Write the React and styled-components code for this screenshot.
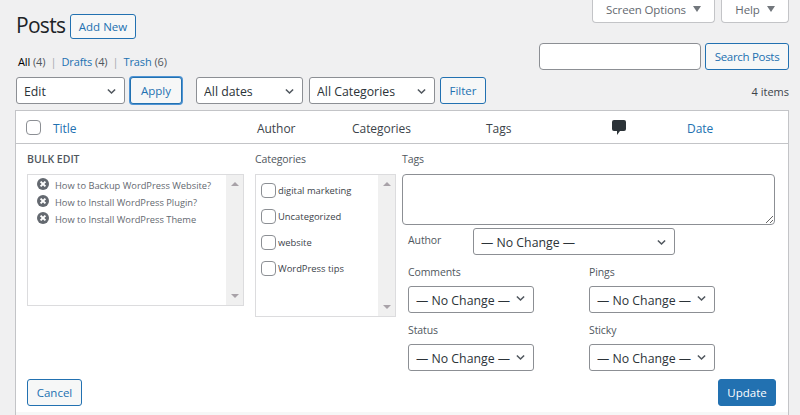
import React from "react";
import styled, { createGlobalStyle } from "styled-components";

const Global = createGlobalStyle`
  html, body { margin: 0; padding: 0; background: #f0f0f1; overflow: hidden; }
  body { font-family: "Open Sans", "Noto Sans", sans-serif; font-size: 12px; color: #3c434a; }
  * { box-sizing: border-box; }
`;

const chevron = `url("data:image/svg+xml,%3Csvg xmlns='http://www.w3.org/2000/svg' viewBox='0 0 10 7'%3E%3Cpath d='M1 1.2l4 4 4-4' fill='none' stroke='%2350575e' stroke-width='1.7'/%3E%3C/svg%3E")`;

const Page = styled.div`
  width: 800px;
  height: 415px;
  overflow: hidden;
  padding: 0 11px 0 16px;
  display: flex;
  flex-direction: column;
`;
const TopTabs = styled.div`
  height: 23px;
  display: flex;
  justify-content: flex-end;
  gap: 6px;
`;
const Tab = styled.div`
  width: ${p => p.$w}px;
  height: 23px;
  background: #fff;
  border: 1px solid #c3c4c7;
  border-top: 0;
  border-radius: 0 0 4px 4px;
  display: flex;
  align-items: center;
  justify-content: center;
  gap: 7px;
  font-size: 11.5px;
  letter-spacing: -0.15px;
  color: #646970;
  padding-bottom: 4px;
`;
const Caret = styled.i`
  width: 0;
  height: 0;
  border-left: 4px solid transparent;
  border-right: 4px solid transparent;
  border-top: 6px solid #72777c;
`;
const HeadRow = styled.div`
  display: flex;
  align-items: flex-start;
  justify-content: space-between;
  height: 54px;
`;
const TitleCol = styled.div`
  display: flex;
  flex-direction: column;
`;
const TitleLine = styled.div`
  display: flex;
  align-items: center;
  margin-top: -9px;
  height: 25px;
  margin-bottom: 15px;
`;
const H1 = styled.h1`
  margin: -3px 8px 0 0;
  width: 46px;
  font-size: 21px;
  letter-spacing: -0.7px;
  font-weight: 400;
  color: #1d2327;
`;
const Button = styled.button`
  font-family: inherit;
  font-size: 11.5px;
  letter-spacing: ${p => p.$ls || 0}px;
  height: ${p => p.$h || 27}px;
  width: ${p => p.$w}px;
  margin-left: ${p => p.$ml || 0}px;
  padding: 0;
  border-radius: 3px;
  border: 1px solid #2271b1;
  background: ${p => (p.$primary ? "#2271b1" : "#f6f7f7")};
  color: ${p => (p.$primary ? "#fff" : "#2271b1")};
  box-shadow: ${p => (p.$focus ? "0 0 0 1px #4f94d4" : "none")};
  flex: none;
`;
const Sub = styled.div`
  display: flex;
  gap: 5px;
  font-size: 11px;
  letter-spacing: -0.1px;
  padding-left: 2px;
  color: #646970;
  line-height: 16px;
`;
const SubLink = styled.span`
  color: ${p => (p.$current ? "#000" : "#2271b1")};
  & > em { font-style: normal; color: #50575e; }
`;
const Sep = styled.span`
  color: #a7aaad;
`;
const SearchBox = styled.div`
  display: flex;
  gap: 4px;
  margin-top: 20px;
`;
const TextInput = styled.input`
  width: 162px;
  height: 27px;
  border: 1px solid #8c8f94;
  border-radius: 4px;
  background: #fff;
  padding: 0 8px;
  outline: none;
`;
const Nav = styled.div`
  display: flex;
  align-items: center;
  height: 27px;
`;
const Select = styled.select`
  appearance: none;
  -webkit-appearance: none;
  flex: none;
  font-family: inherit;
  font-size: 12.3px;
  color: #2c3338;
  width: ${p => p.$w}px;
  height: 27px;
  margin-left: ${p => p.$ml || 0}px;
  padding: 2px 20px 0 7px;
  border: 1px solid #8c8f94;
  border-radius: 3px;
  background: #fff ${chevron} no-repeat right 8px top ${p => p.$arrowTop || 10}px;
  background-size: 9px 7px;
  outline: none;
`;
const Items = styled.div`
  margin-left: auto;
  font-size: 11px;
  padding-top: 1px;
  color: #3c434a;
`;
const Table = styled.div`
  margin-top: 6px;
  margin-left: -1px;
  height: 305px;
  background: #fff;
  border: 1px solid #c3c4c7;
  border-bottom: 0;
  display: flex;
  flex-direction: column;
`;
const Header = styled.div`
  height: 33px;
  flex: none;
  border-bottom: 1px solid #c3c4c7;
  display: grid;
  grid-template-columns: 37px 204px 95px 134px 125px 76px 1fr;
  align-items: center;
  font-size: 12px;
  letter-spacing: -0.05px;
`;
const Col = styled.div`
  padding-top: 2px;
  color: ${p => (p.$link ? "#2271b1" : "#3c434a")};
`;
const Check = styled.span`
  display: block;
  flex: none;
  width: 15px;
  height: 15px;
  background: #fff;
  border: 1px solid #8c8f94;
  border-radius: 4px;
`;
const HeadCheck = styled(Check)`
  margin-left: 10px;
`;
const Edit = styled.div`
  display: flex;
  flex: 1;
  padding: 7px 12px 0 11px;
  position: relative;
`;
const Left = styled.div`
  width: 228px;
  flex: none;
`;
const Middle = styled.div`
  width: 147px;
  flex: none;
`;
const Right = styled.div`
  width: 374px;
  flex: none;
`;
const Legend = styled.div`
  font-size: 10.5px;
  font-weight: 600;
  height: 16px;
  line-height: 16px;
  color: #50575e;
  margin-bottom: 7px;
`;
const Label = styled.div`
  font-size: 10.5px;
  letter-spacing: -0.1px;
  height: 16px;
  line-height: 16px;
  color: #50575e;
`;
const Cap = styled(Label)`
  margin-bottom: 7px;
`;
const ScrollBox = styled.div`
  width: ${p => p.$w}px;
  height: ${p => p.$h}px;
  border: 1px solid #dcdcde;
  display: flex;
`;
const ScrollContent = styled.div`
  flex: 1;
  min-width: 0;
  padding: ${p => p.$pad};
`;
const Scrollbar = styled.div`
  width: 17px;
  flex: none;
  background: #f0f0f0;
  display: flex;
  flex-direction: column;
  justify-content: space-between;
  align-items: center;
  padding: 7px 0;
`;
const ArrowUp = styled.i`
  width: 0;
  height: 0;
  border-left: 4px solid transparent;
  border-right: 4px solid transparent;
  border-bottom: 4px solid #a8a2a8;
`;
const ArrowDown = styled.i`
  width: 0;
  height: 0;
  border-left: 4px solid transparent;
  border-right: 4px solid transparent;
  border-top: 4px solid #a8a2a8;
`;
const PostRow = styled.div`
  display: flex;
  align-items: center;
  gap: 6px;
  height: 17px;
  font-size: 9.3px;
  color: #646970;
`;
const CatRow = styled.div`
  display: flex;
  align-items: center;
  gap: 2px;
  height: 26px;
  font-size: 9.4px;
  color: #3c434a;
`;
const TagArea = styled.textarea`
  display: block;
  width: 373px;
  height: 51px;
  border: 1px solid #8c8f94;
  border-radius: 4px;
  outline: none;
  background: #fff;
`;
const AuthorRow = styled.div`
  display: flex;
  margin-top: 3px;
  padding-left: 6px;
`;
const AuthorLabel = styled(Label)`
  width: 65px;
  margin-top: 4px;
`;
const Grid = styled.div`
  display: grid;
  grid-template-columns: 181px 126px;
  padding-left: 6px;
  margin-top: 9px;
  row-gap: 9px;
`;
const Field = styled.div`
  display: flex;
  flex-direction: column;
  gap: 6px;
`;
const Actions = styled.div`
  position: absolute;
  left: 11px;
  right: 12px;
  top: 235px;
  display: flex;
  justify-content: space-between;
`;
const Strip = styled.div`
  height: 3px;
  background: #f6f7f7;
  margin-top: auto;
  flex: none;
`;

const X = () => (
  <svg width="12" height="12" viewBox="0 0 12 12" style={{ marginTop: -3, marginLeft: 9, flex: "none" }}>
    <circle cx="6" cy="6" r="6" fill="#646970" />
    <path d="M3.6 3.6l4.8 4.8M8.4 3.6l-4.8 4.8" stroke="#fff" strokeWidth="2" />
  </svg>
);
const Bubble = () => (
  <svg width="14" height="15" viewBox="0 0 14 15" style={{ display: "block", marginTop: -1, marginLeft: 1 }}>
    <path d="M2 0h10a2 2 0 0 1 2 2v7a2 2 0 0 1-2 2H8l-3 4v-4H2a2 2 0 0 1-2-2V2a2 2 0 0 1 2-2z" fill="#2c3338" />
  </svg>
);
const NoChange = ({ w, arrowTop }) => (
  <Select $w={w} $arrowTop={arrowTop} defaultValue="n">
    <option value="n">— No Change —</option>
  </Select>
);

export default function App() {
  return (
    <Page>
      <Global />
      <TopTabs>
        <Tab $w={123}>Screen Options <Caret /></Tab>
        <Tab $w={68}>Help <Caret /></Tab>
      </TopTabs>
      <HeadRow>
        <TitleCol>
          <TitleLine>
            <H1>Posts</H1>
            <Button $w={66} $h={25}>Add New</Button>
          </TitleLine>
          <Sub>
            <SubLink $current>All <em>(4)</em></SubLink>
            <Sep>|</Sep>
            <SubLink>Drafts <em>(4)</em></SubLink>
            <Sep>|</Sep>
            <SubLink>Trash <em>(6)</em></SubLink>
          </Sub>
        </TitleCol>
        <SearchBox>
          <TextInput />
          <Button $w={84} $ls={-0.3}>Search Posts</Button>
        </SearchBox>
      </HeadRow>
      <Nav>
        <Select $w={109} defaultValue="e"><option value="e">Edit</option></Select>
        <Button $w={52} $focus $ml={5}>Apply</Button>
        <Select $w={107} $ml={14} defaultValue="d"><option value="d">All dates</option></Select>
        <Select $w={126} $ml={6} defaultValue="c"><option value="c">All Categories</option></Select>
        <Button $w={46} $ml={5}>Filter</Button>
        <Items>4 items</Items>
      </Nav>
      <Table>
        <Header>
          <HeadCheck />
          <Col $link>Title</Col>
          <Col>Author</Col>
          <Col>Categories</Col>
          <Col>Tags</Col>
          <Col><Bubble /></Col>
          <Col $link>Date</Col>
        </Header>
        <Edit>
          <Left>
            <Legend>BULK EDIT</Legend>
            <ScrollBox $w={217} $h={132}>
              <ScrollContent $pad="2px 0 0 0">
                <PostRow><X />How to Backup WordPress Website?</PostRow>
                <PostRow><X />How to Install WordPress Plugin?</PostRow>
                <PostRow><X />How to Install WordPress Theme</PostRow>
              </ScrollContent>
              <Scrollbar><ArrowUp /><ArrowDown /></Scrollbar>
            </ScrollBox>
          </Left>
          <Middle>
            <Cap>Categories</Cap>
            <ScrollBox $w={141} $h={143}>
              <ScrollContent $pad="2px 0 0 5px">
                <CatRow><Check />digital marketing</CatRow>
                <CatRow><Check />Uncategorized</CatRow>
                <CatRow><Check />website</CatRow>
                <CatRow><Check />WordPress tips</CatRow>
              </ScrollContent>
              <Scrollbar><ArrowUp /><ArrowDown /></Scrollbar>
            </ScrollBox>
          </Middle>
          <Right>
            <Cap>Tags</Cap>
            <TagArea />
            <AuthorRow>
              <AuthorLabel>Author</AuthorLabel>
              <NoChange w={202} />
            </AuthorRow>
            <Grid>
              <Field><Label>Comments</Label><NoChange w={126} arrowTop={8} /></Field>
              <Field><Label>Pings</Label><NoChange w={126} arrowTop={8} /></Field>
              <Field><Label>Status</Label><NoChange w={126} arrowTop={9} /></Field>
              <Field><Label>Sticky</Label><NoChange w={126} arrowTop={9} /></Field>
            </Grid>
          </Right>
          <Actions>
            <Button $w={55}>Cancel</Button>
            <Button $w={58} $primary>Update</Button>
          </Actions>
        </Edit>
        <Strip />
      </Table>
    </Page>
  );
}
